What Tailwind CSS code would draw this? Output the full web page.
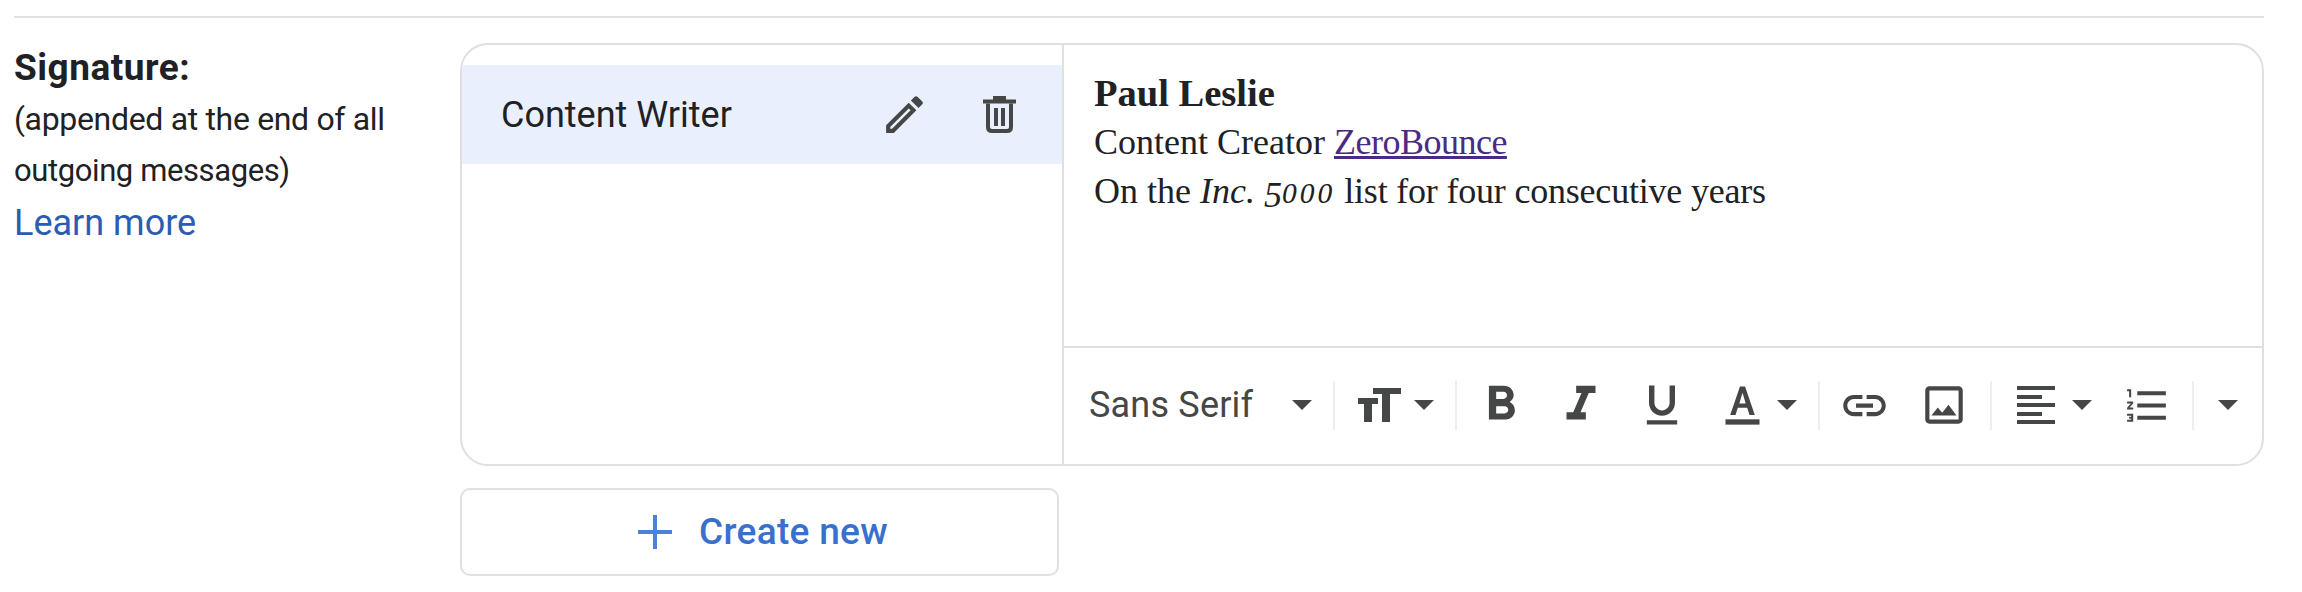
<!doctype html>
<html>
<head>
<meta charset="utf-8">
<script src="https://cdn.jsdelivr.net/npm/@tailwindcss/browser@4"></script>
</head>
<body class="bg-white w-[2302px] h-[592px] overflow-hidden font-['Roboto',sans-serif] text-[#202124]">
<div class="pt-[16px] pl-[14px] pr-[38px]">
  <div class="h-[2px] bg-[#e2e2e2]"></div>
  <div class="flex mt-[25px]">
    <div class="w-[446px] shrink-0 -mt-[2px] leading-[52px] text-[#202124] whitespace-nowrap">
      <div class="font-bold text-[37px] tracking-[0.5px] pt-[1px] -mb-[1px]">Signature:</div>
      <div class="text-[32px] tracking-[-0.33px]">(appended at the end of all</div>
      <div class="text-[31px] tracking-[-0.4px]">outgoing messages)</div>
      <div class="text-[36px] text-[#2b5cb3]">Learn more</div>
    </div>
    <div class="flex-1 min-w-0">
      <div class="h-[423px] border-2 border-[#e0e0e0] rounded-[28px] overflow-hidden flex">
        <div class="w-[602px] shrink-0 border-r-2 border-[#e0e0e0] pt-[20px]">
          <div class="h-[99px] bg-[#e9effd] flex items-center pl-[39px]">
            <span class="w-[229px] text-[36px] text-[#202124] whitespace-nowrap">Content Writer</span>
            <svg class="ml-[150px] shrink-0" width="49" height="49" viewBox="0 0 24 24" fill="#444746"><path d="M3 17.25V21h3.75L17.81 9.94l-3.75-3.75L3 17.25zM5.92 19H5v-.92l9.06-9.06.92.92L5.92 19zM20.71 5.63l-2.34-2.34c-.2-.2-.45-.29-.71-.29s-.51.1-.7.29l-1.83 1.83 3.75 3.75 1.83-1.83c.39-.39.39-1.02 0-1.41z"/></svg>
            <svg class="ml-[54px] shrink-0" width="33" height="37" viewBox="0 0 33 37" fill="#444746"><rect x="10" y="0" width="13" height="5"/><rect x="0" y="3.5" width="33" height="4"/><path d="M5 7.5V31q0 4 4 4H24q4 0 4-4V7.5" fill="none" stroke="#444746" stroke-width="4"/><rect x="11" y="12" width="4" height="18"/><rect x="18" y="12" width="4" height="18"/></svg>
          </div>
        </div>
        <div class="flex-1 flex flex-col min-w-0">
          <div class="h-[303px] pt-[24px] pl-[30px] font-['Liberation_Serif',serif] text-[36px] leading-[49px] text-[#202124] border-b-2 border-[#e0e0e0] whitespace-nowrap">
            <div class="font-bold text-[38.5px]">Paul Leslie</div>
            <div>Content Creator <a class="text-[#4b2a86] underline tracking-[-0.5px]">ZeroBounce</a></div>
            <div>On the <i>Inc. <span class="align-[-0.1em] leading-[0]">5</span><span class="text-[0.82em] tracking-[3px]">000</span></i> <span class="tracking-[-0.2px]">list for four consecutive years</span></div>
          </div>
          <div class="flex-1 flex items-center pb-[2px] text-[#444746]">
            <span class="ml-[25px] w-[164px] shrink-0 text-[36px] tracking-[0.2px] whitespace-nowrap text-[#444746]">Sans Serif</span>
            <svg class="ml-[39px] shrink-0" width="20" height="10" viewBox="0 0 20 10" fill="#444746"><path d="M0 0h20L10 10z"/></svg>
            <div class="ml-[21px] w-[2px] h-[49px] shrink-0 bg-[#eeeeee]"></div>
            <svg class="ml-[23px] shrink-0" width="43" height="34" viewBox="0 0 43 34" fill="#444746"><path d="M15 0h28v6H32v28h-8V6h-9zM0 10h20v6h-6v18H6V16H0z"/></svg>
            <svg class="ml-[13px] shrink-0" width="20" height="10" viewBox="0 0 20 10" fill="#444746"><path d="M0 0h20L10 10z"/></svg>
            <div class="ml-[21px] w-[2px] h-[49px] shrink-0 bg-[#eeeeee]"></div>
            <svg class="ml-[15px] shrink-0" width="58" height="58" viewBox="0 0 24 24" fill="#444746"><path d="M15.6 10.79c.97-.67 1.65-1.77 1.65-2.79 0-2.26-1.75-4-4-4H7v14h7.04c2.09 0 3.71-1.7 3.71-3.79 0-1.52-.86-2.82-2.15-3.42zM10 6.5h3c.83 0 1.5.67 1.5 1.5s-.67 1.5-1.5 1.5h-3v-3zm3.5 9H10v-3h3.5c.83 0 1.5.67 1.5 1.5s-.67 1.5-1.5 1.5z"/></svg>
            <svg class="ml-[22px] shrink-0" width="58" height="58" viewBox="0 0 24 24" fill="#444746"><path d="M10 4v3h2.21l-3.42 8H6v3h8v-3h-2.21l3.42-8H18V4z"/></svg>
            <svg class="ml-[26px] shrink-0" width="52" height="52" viewBox="0 0 24 24" fill="#444746"><path d="M12 17c3.31 0 6-2.69 6-6V3h-2.5v8c0 1.93-1.57 3.5-3.5 3.5S8.5 12.93 8.5 11V3H6v8c0 3.31 2.69 6 6 6zm-7 2v2h14v-2H5z"/></svg>
            <svg class="ml-[29px] shrink-0" width="51" height="51" viewBox="0 0 24 24" fill="#444746"><path d="M10.8 3h2.4l4.6 13.5h-2.5l-1.1-3.4H9.8l-1.1 3.4H6.2zM10.5 11h3L12 6z" fill-rule="evenodd"/><rect x="4" y="18.5" width="16" height="2.5"/></svg>
            <svg class="ml-[9px] shrink-0" width="20" height="10" viewBox="0 0 20 10" fill="#444746"><path d="M0 0h20L10 10z"/></svg>
            <div class="ml-[21px] w-[2px] h-[49px] shrink-0 bg-[#eeeeee]"></div>
            <svg class="ml-[19px] shrink-0" width="51" height="51" viewBox="0 0 24 24" fill="#444746"><path d="M3.9 12c0-1.71 1.39-3.1 3.1-3.1h4V7H7c-2.76 0-5 2.24-5 5s2.24 5 5 5h4v-1.9H7c-1.71 0-3.1-1.39-3.1-3.1zM8 13h8v-2H8v2zm9-6h-4v1.9h4c1.71 0 3.1 1.39 3.1 3.1s-1.39 3.1-3.1 3.1h-4V17h4c2.76 0 5-2.24 5-5s-2.24-5-5-5z"/></svg>
            <svg class="ml-[29px] shrink-0" width="50" height="50" viewBox="0 0 24 24" fill="#444746"><path d="M19 5v14H5V5h14m0-2H5c-1.1 0-2 .9-2 2v14c0 1.1.9 2 2 2h14c1.1 0 2-.9 2-2V5c0-1.1-.9-2-2-2zm-4.86 8.86l-3 3.87L9 13.14 6 17h12l-3.86-5.14z"/></svg>
            <div class="ml-[21px] w-[2px] h-[49px] shrink-0 bg-[#eeeeee]"></div>
            <div class="ml-[25px] w-[38px] shrink-0 flex flex-col gap-[4.5px]">
              <div class="h-[4px] bg-[#444746]"></div>
              <div class="h-[4px] w-[25px] bg-[#444746]"></div>
              <div class="h-[4px] bg-[#444746]"></div>
              <div class="h-[4px] w-[25px] bg-[#444746]"></div>
              <div class="h-[4px] bg-[#444746]"></div>
            </div>
            <svg class="ml-[17px] shrink-0" width="20" height="10" viewBox="0 0 20 10" fill="#444746"><path d="M0 0h20L10 10z"/></svg>
            <svg class="ml-[31px] shrink-0" width="49" height="49" viewBox="0 0 24 24" fill="#444746"><path d="M2 17h2v.5H3v1h1v.5H2v1h3v-4H2v1zm1-9h1V4H2v1h1v3zm-1 3h1.8L2 13.1v.9h3v-1H3.2L5 10.9V10H2v1zm5-6v2h14V5H7zm0 14h14v-2H7v2zm0-6h14v-2H7v2z"/></svg>
            <div class="ml-[20px] w-[2px] h-[49px] shrink-0 bg-[#eeeeee]"></div>
            <svg class="ml-[24px] shrink-0" width="20" height="10" viewBox="0 0 20 10" fill="#444746"><path d="M0 0h20L10 10z"/></svg>
          </div>
        </div>
      </div>
      <div class="mt-[22px] w-[599px] h-[88px] border-2 border-[#e0e0e0] rounded-[10px] flex items-center justify-center gap-[27px] pl-[7px]">
        <svg width="34" height="34" viewBox="0 0 34 34" fill="#4a80de"><rect x="15" y="0" width="4" height="34"/><rect x="0" y="15" width="34" height="4"/></svg>
        <span class="text-[37px] font-medium tracking-[0.3px] text-[#3a70cd] whitespace-nowrap">Create new</span>
      </div>
    </div>
  </div>
</div>
</body>
</html>
